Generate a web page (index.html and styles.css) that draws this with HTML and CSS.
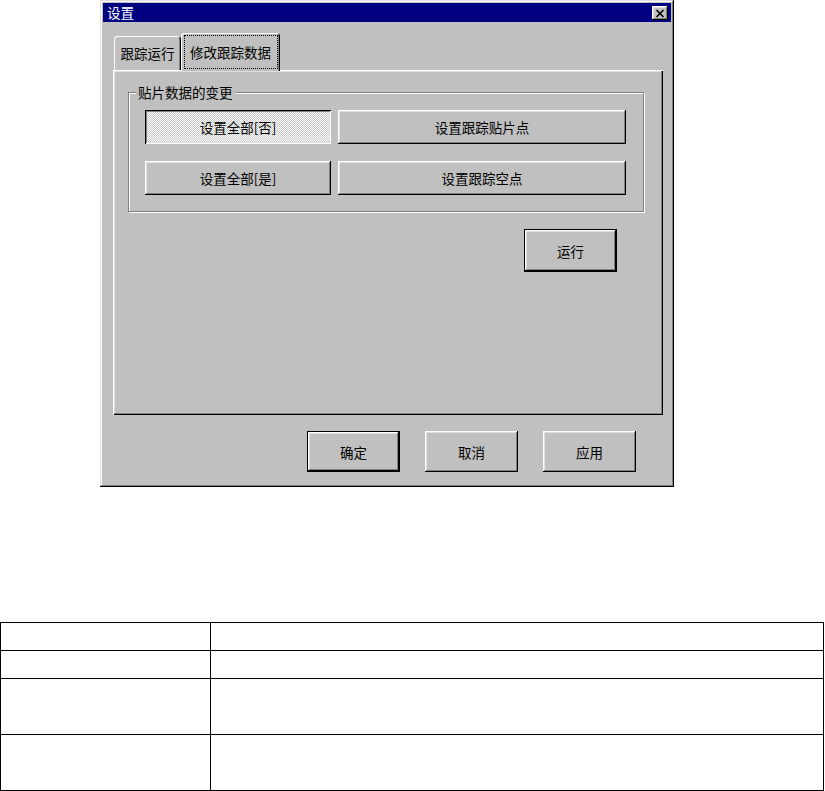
FILE: index.html
```html
<!DOCTYPE html>
<html>
	<head>
		<meta charset="utf-8">
		<meta name="viewport" content="width=device-width, initial-scale=1.0">
		<link rel="stylesheet" href="styles.css">
		<title>设置</title>
	</head>
	<body>
		<div class="window">
			<div class="titlebar">
				<span class="title">设置</span>
				<span class="close">
					<svg width="16" height="14" viewBox="0 0 16 14">
						<path d="M4.5 4 L11.5 11 M11.5 4 L4.5 11" stroke="#000" stroke-width="1.6" fill="none"/>
					</svg>
				</span>
			</div>
			<div class="tabs">
				<div class="tab">跟踪运行</div>
				<div class="tab tab-active"><span class="focus">修改跟踪数据</span></div>
			</div>
			<div class="panel">
				<fieldset class="group">
					<legend>贴片数据的变更</legend>
					<div class="group-grid">
						<button class="btn btn-checked">设置全部[否]</button>
						<button class="btn">设置跟踪贴片点</button>
						<button class="btn">设置全部[是]</button>
						<button class="btn">设置跟踪空点</button>
					</div>
				</fieldset>
				<div class="run-row">
					<button class="btn btn-default btn-run">运行</button>
				</div>
			</div>
			<div class="actions">
				<button class="btn btn-default btn-action">确定</button>
				<button class="btn btn-action">取消</button>
				<button class="btn btn-action">应用</button>
			</div>
		</div>
		<table class="grid">
			<colgroup>
				<col class="col-name">
				<col>
			</colgroup>
			<tr class="row"><td></td><td></td></tr>
			<tr class="row"><td></td><td></td></tr>
			<tr class="row row-tall"><td></td><td></td></tr>
			<tr class="row row-tall"><td></td><td></td></tr>
		</table>
	</body>
</html>
```

FILE: styles.css
```css
* {
	margin: 0;
	padding: 0;
	box-sizing: border-box;
}

body {
	background-color: #fff;
	font-family: "Noto Sans CJK SC", "Liberation Sans", sans-serif;
	font-size: 13.5px;
	color: #000;
}

.window {
	display: flex;
	flex-direction: column;
	margin-left: 100px;
	padding: 3px;
	width: 574px;
	height: 487px;
	background-color: #c0c0c0;
	box-shadow: inset -1px -1px #000, inset 1px 1px #dfdfdf, inset -2px -2px #808080, inset 2px 2px #fff;
}

.titlebar {
	display: flex;
	align-items: center;
	justify-content: space-between;
	padding: 0 3px 0 4px;
	height: 19px;
	background-color: #000080;
}

.title {
	color: #fff;
	line-height: 19px;
}

.close {
	display: flex;
	width: 16px;
	height: 14px;
	background-color: #c0c0c0;
	box-shadow: inset -1px -1px #000, inset 1px 1px #fff, inset -2px -2px #808080, inset 2px 2px #dfdfdf;
}

.tabs {
	display: flex;
	align-items: flex-end;
	margin-top: 11px;
	padding-left: 11px;
	height: 37px;
}

.tab {
	display: flex;
	align-items: center;
	justify-content: center;
	width: 67px;
	height: 34px;
	border-radius: 3px 3px 0 0;
	box-shadow: inset 1px 1px #fff, inset -1px 0 #000, inset -2px 0 #808080;
}

.tab-active {
	position: relative;
	z-index: 1;
	margin-bottom: -1px;
	width: 99px;
	height: 38px;
	background-color: #c0c0c0;
	box-shadow: inset 1px 1px #fff, inset -1px 0 #000, inset -2px 0 #808080;
}

.focus {
	display: flex;
	align-items: center;
	justify-content: center;
	width: 92px;
	height: 32px;
	outline: 1px dotted #000;
}

.panel {
	display: flex;
	flex-direction: column;
	margin-left: 10px;
	padding: 15px 19px 0 15px;
	width: 550px;
	height: 345px;
	box-shadow: inset 1px 1px #fff, inset -1px -1px #000, inset -2px -2px #808080, inset 2px 2px #dfdfdf;
}

.group {
	padding: 10px 17px 16px 16px;
	border: 1px solid #808080;
	box-shadow: inset 1px 1px #fff, 1px 1px #fff;
}

.group legend {
	margin-left: -9px;
	padding: 0 2px;
	line-height: 15px;
	background-color: #c0c0c0;
}

.group-grid {
	display: grid;
	grid-template-columns: 186px 288px;
	grid-auto-rows: 34px;
	gap: 17px 7px;
}

.btn {
	font-family: inherit;
	font-size: 13.5px;
	color: #000;
	border: none;
	background-color: #c0c0c0;
	box-shadow: inset -1px -1px #000, inset 1px 1px #fff, inset -2px -2px #808080, inset 2px 2px #dfdfdf;
}

.btn-checked {
	background: repeating-conic-gradient(#fff 0 25%, #c8c8c8 0 50%) 0 0 / 2px 2px;
	box-shadow: inset 1px 1px #000, inset -1px -1px #fff, inset 2px 2px #808080, inset -2px -2px #dfdfdf;
}

.btn-default {
	border: 1px solid #000;
}

.run-row {
	display: flex;
	justify-content: flex-end;
	margin: 17px 27px 0 0;
}

.btn-run {
	width: 93px;
	height: 43px;
}

.actions {
	display: flex;
	justify-content: flex-end;
	gap: 25px;
	margin-top: 16px;
	padding-right: 35px;
}

.btn-action {
	width: 93px;
	height: 41px;
}

.grid {
	margin-top: 135px;
	width: 824px;
	border-collapse: collapse;
	table-layout: fixed;
}

.col-name {
	width: 210px;
}

.grid td {
	border: 1px solid #000;
	height: 28px;
}

.grid .row-tall td {
	height: 56px;
}
```
